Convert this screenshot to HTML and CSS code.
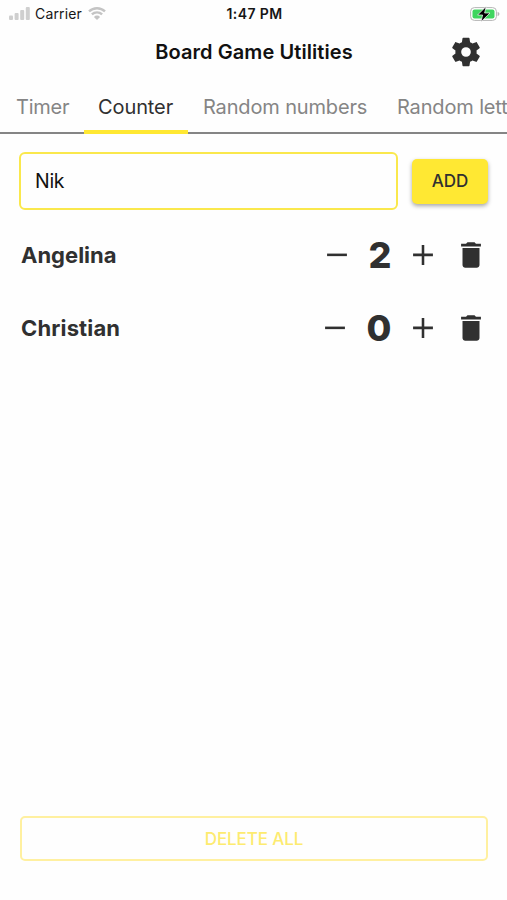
FILE: index.html
```html
<!DOCTYPE html>
<html lang="en">
<head>
<meta charset="utf-8">
<title>Board Game Utilities</title>
<link rel="stylesheet" href="styles.css">
</head>
<body>
<svg class="defs" aria-hidden="true">
  <symbol id="minus" viewBox="0 0 24 24"><path d="M19 12.8H5v-1.8h14z"/></symbol>
  <symbol id="plus" viewBox="0 0 24 24"><path d="M19 12.8h-6.1V19h-1.8v-6.2H5v-1.8h6.1V5h1.8v6H19z"/></symbol>
  <symbol id="trash" viewBox="0 0 24 24"><path d="M6 19c0 1.1.9 2 2 2h8c1.1 0 2-.9 2-2V7H6v12zM19 4h-3.5l-1-1h-5l-1 1H5v2h14V4z"/></symbol>
</svg>
<div class="status">
  <div class="carrier">
    <svg class="signal" viewBox="0 0 21 13"><rect x="0" y="8.5" width="4" height="4.5" rx="1"/><rect x="5.6" y="6" width="4" height="7" rx="1"/><rect x="11.2" y="3" width="4" height="10" rx="1"/><rect x="16.8" y="0" width="4" height="13" rx="1"/></svg>
    <span class="carrier-name">Carrier</span>
    <svg class="wifi" viewBox="0 0 18 13"><path d="M1 4.4a11.6 11.6 0 0 1 16 0M3.9 7.4a7.4 7.4 0 0 1 10.2 0"/><path class="dot" d="M9 13 5.9 9.9a4.4 4.4 0 0 1 6.2 0z"/></svg>
  </div>
  <span class="clock">1:47 PM</span>
  <svg class="battery" viewBox="0 0 30 16"><rect x=".6" y="1.6" width="25.8" height="12.8" rx="3.8" class="shell"/><rect x="2.5" y="3.5" width="22" height="9" rx="2" class="charge"/><path class="cap" d="M27.6 5.8c2.4.8 2.4 3.6 0 4.4z"/><path class="bolt" d="M16.2.4 7.6 9h5l-1.6 6.8L20 7h-5.4z"/></svg>
</div>
<header class="header">
  <h1 class="title">Board Game Utilities</h1>
  <svg class="icon gear" viewBox="0 0 24 24"><path d="M19.43 12.98c.04-.32.07-.64.07-.98s-.03-.66-.07-.98l2.11-1.65c.19-.15.24-.42.12-.64l-2-3.46c-.12-.22-.39-.3-.61-.22l-2.49 1c-.52-.4-1.08-.73-1.69-.98l-.38-2.65C14.46 2.18 14.25 2 14 2h-4c-.25 0-.46.18-.49.42l-.38 2.65c-.61.25-1.17.59-1.69.98l-2.49-1c-.23-.09-.49 0-.61.22l-2 3.46c-.13.22-.07.49.12.64l2.11 1.65c-.04.32-.07.65-.07.98s.03.66.07.98l-2.11 1.65c-.19.15-.24.42-.12.64l2 3.46c.12.22.39.3.61.22l2.49-1c.52.4 1.08.73 1.69.98l.38 2.65c.03.24.24.42.49.42h4c.25 0 .46-.18.49-.42l.38-2.65c.61-.25 1.17-.59 1.69-.98l2.49 1c.23.09.49 0 .61-.22l2-3.46c.12-.22.07-.49-.12-.64l-2.11-1.65zM12 15.4a3.4 3.4 0 1 1 0-6.8 3.4 3.4 0 0 1 0 6.8z"/></svg>
</header>
<nav class="tabs">
  <span class="tab timer">Timer</span>
  <span class="tab counter active">Counter</span>
  <span class="tab numbers">Random numbers</span>
  <span class="tab letters">Random letters</span>
</nav>
<main class="main">
  <div class="entry">
    <div class="field"><span class="value">Nik</span></div>
    <button class="add">ADD</button>
  </div>
  <div class="row">
    <span class="name">Angelina</span>
    <svg class="icon"><use href="#minus"/></svg>
    <span class="count">2</span>
    <svg class="icon"><use href="#plus"/></svg>
    <svg class="icon trash"><use href="#trash"/></svg>
  </div>
  <div class="row">
    <span class="name christian">Christian</span>
    <svg class="icon"><use href="#minus"/></svg>
    <span class="count zero">0</span>
    <svg class="icon"><use href="#plus"/></svg>
    <svg class="icon trash"><use href="#trash"/></svg>
  </div>
  <button class="delete">DELETE ALL</button>
</main>
</body>
</html>
```
FILE: styles.css
```css
* { box-sizing: border-box; }
body {
  margin: 0;
  height: 900px;
  overflow: hidden;
  display: flex;
  flex-direction: column;
  background: #fefefe;
  color: #303030;
  font-family: Inter, "Liberation Sans", sans-serif;
  white-space: nowrap;
}
svg { display: block; flex: none; }
.defs { position: absolute; width: 0; height: 0; }
.status {
  height: 27px;
  display: grid;
  grid-template-columns: 1fr auto 1fr;
  align-items: center;
  padding: 0 7px 0 9px;
  color: #161616;
}
.carrier { display: flex; align-items: center; }
.signal { width: 21px; height: 13px; fill: #cfcfcf; }
.carrier-name { margin-left: 5px; width: 47px; font-size: 14px; letter-spacing: .15px; }
.wifi { width: 18px; height: 13px; margin-left: 6px; fill: none; stroke: #c4c4c4; stroke-width: 2.4; }
.wifi .dot { fill: #c4c4c4; stroke: none; }
.clock { font-size: 14px; font-weight: 600; letter-spacing: .4px; }
.battery { width: 30px; height: 16px; justify-self: end; }
.shell { fill: #fff; stroke: #b5b5b5; stroke-width: 1; }
.charge { fill: #3fd55f; }
.cap { fill: #b5b5b5; }
.bolt { fill: #000; stroke: #fff; stroke-width: .7; }
.header {
  height: 54px;
  display: grid;
  grid-template-columns: 1fr auto 1fr;
  padding: 8px 24px 0 25px;
}
.title { grid-column: 2; margin: 0; font-size: 20px; line-height: 35px; font-weight: 600; letter-spacing: .08px; color: #111; }
.icon { width: 34px; height: 34px; fill: #303030; }
.gear { justify-self: end; }
.tabs {
  height: 53px;
  flex: none;
  display: flex;
  overflow: hidden;
  background: linear-gradient(#858585, #858585) bottom / 100% 2px no-repeat;
}
.tab {
  flex: none;
  height: 53px;
  line-height: 52px;
  font-size: 20px;
  letter-spacing: -.15px;
  color: #858585;
}
.timer { width: 84px; padding-left: 16px; letter-spacing: -.25px; }
.counter { width: 104px; padding-left: 14px; }
.numbers { width: 194px; padding-left: 15px; }
.letters { padding-left: 15px; }
.active { letter-spacing: -.1px; color: #303030; border-bottom: 4px solid #ffe833; }
.main { flex: 1; display: flex; flex-direction: column; padding: 18px 19px 39px; }
.entry { display: flex; align-items: center; gap: 14px; height: 58px; margin-bottom: 8px; }
.field {
  width: 379px;
  height: 58px;
  border: 2px solid #fae84c;
  border-radius: 6px;
  padding-left: 14px;
  font-size: 19.5px;
  letter-spacing: -.3px;
  line-height: 54px;
  color: #111;
}
button { font: inherit; padding: 0; }
.add {
  width: 76px;
  height: 45px;
  border: 0;
  border-radius: 5px;
  background: #ffe833;
  box-shadow: 0 2px 4px rgba(0, 0, 0, .35);
  color: #303030;
  font-size: 17px;
  font-weight: 500;
  letter-spacing: -.1px;
}
.row { display: flex; align-items: center; height: 73px; padding: 0 0 0 2px; }
.name { flex: 1; font-size: 22px; font-weight: 700; }
.christian { letter-spacing: .15px; }
.count { width: 52px; text-align: center; font-size: 36px; line-height: 44px; font-weight: 800; }
.zero { width: 54px; }
.trash { margin-left: 14px; }
.delete {
  margin: auto 0 0 1px;
  height: 45px;
  border: 2px solid #fff0a0;
  border-radius: 5px;
  background: transparent;
  color: #fdeb70;
  font-size: 17px;
  font-weight: 500;
  letter-spacing: -.1px;
}
```
